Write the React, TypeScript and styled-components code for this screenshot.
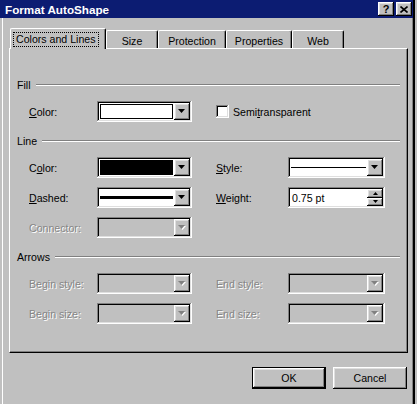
import styled, { createGlobalStyle, css } from "styled-components";

const GlobalStyle = createGlobalStyle`
  html, body {
    margin: 0;
    padding: 0;
    background: #c0c0c0;
  }
  body {
    font-family: "Liberation Sans", Arial, sans-serif;
    font-size: 10.6px;
    color: #000;
  }
`;

const raised = css`
  box-shadow: inset -1px -1px #000, inset 1px 1px #fff, inset -2px -2px #808080,
    inset 2px 2px #dfdfdf;
`;

const sunken = css`
  box-shadow: inset -1px -1px #fff, inset 1px 1px #808080, inset -2px -2px #dfdfdf,
    inset 2px 2px #000;
`;

const Frame = styled.div`
  box-sizing: border-box;
  width: 415px;
  height: 404px;
  border-right: 2px solid #000;
  box-shadow: inset -1px 0 #808080;
  display: flex;
  flex-direction: column;
`;

const TitleBar = styled.div`
  height: 18px;
  flex-shrink: 0;
  background: #0c1c72;
  color: #fff;
  font-weight: bold;
  font-size: 11.7px;
  display: flex;
  align-items: center;
  justify-content: space-between;
  padding: 0 1px 0 5px;
`;

const TitleButtons = styled.div`
  display: flex;
  gap: 2px;
`;

const TitleButton = styled.div`
  box-sizing: border-box;
  width: 16px;
  height: 14px;
  background: #c0c0c0;
  color: #000;
  font-weight: bold;
  font-size: 11px;
  display: flex;
  align-items: center;
  justify-content: center;
  ${raised};
`;

const Body = styled.div`
  flex: 1;
  margin-left: 2px;
  border-left: 1px solid #fff;
  padding: 10px 5px 0 6px;
`;

const TabStrip = styled.div`
  display: flex;
  align-items: flex-end;
  height: 20px;
  padding-left: 1px;
`;

const Tab = styled.div<{ $active?: boolean; $w: number }>`
  box-sizing: border-box;
  width: ${(p) => p.$w}px;
  height: ${(p) => (p.$active ? 21 : 18)}px;
  border-top: 1px solid #fff;
  border-left: 1px solid #fff;
  border-right: 1px solid #000;
  border-radius: 2px 2px 0 0;
  box-shadow: inset -1px 0 #808080;
  background: #c0c0c0;
  display: flex;
  align-items: center;
  justify-content: ${(p) => (p.$active ? "flex-start" : "center")};
  padding-top: ${(p) => (p.$active ? 0 : 2)}px;
  padding-left: ${(p) => (p.$active ? 2 : 0)}px;
  ${(p) =>
    p.$active &&
    css`
      margin-bottom: -1px;
      position: relative;
      z-index: 1;
    `}
`;

const FocusRing = styled.span`
  border: 1px dotted #000;
  padding: 0 2px;
  line-height: 13px;
  white-space: nowrap;
`;

const Panel = styled.div`
  box-sizing: border-box;
  width: 399px;
  height: 305px;
  border-top: 1px solid #fff;
  border-left: 1px solid #fff;
  border-right: 1px solid #000;
  border-bottom: 1px solid #000;
  box-shadow: inset -1px -1px #808080;
  padding: 29px 7px 0 7px;
`;

const Section = styled.div`
  display: flex;
  flex-direction: column;
  gap: 9px;
  & + & {
    margin-top: 12px;
  }
`;

const SectionHeader = styled.div`
  display: flex;
  align-items: center;
  gap: 5px;
  height: 13px;
  margin-bottom: 1px;
`;

const Rule = styled.div`
  flex: 1;
  border-top: 1px solid #808080;
  border-bottom: 1px solid #fff;
`;

const Row = styled.div`
  display: grid;
  grid-template-columns: 68px 95px 24px 72px 97px;
  align-items: center;
  height: 21px;
  padding-left: 12px;
`;

const Label = styled.span<{ $disabled?: boolean; $col?: number }>`
  grid-column: ${(p) => p.$col ?? 1};
  white-space: nowrap;
  color: ${(p) => (p.$disabled ? "#868686" : "#000")};
  text-shadow: ${(p) => (p.$disabled ? "1px 1px 0 #fff" : "none")};
`;

const Combo = styled.div<{ $disabled?: boolean; $col?: number }>`
  grid-column: ${(p) => p.$col ?? 2};
  box-sizing: border-box;
  height: 21px;
  display: flex;
  padding: 2px;
  background: ${(p) => (p.$disabled ? "#c0c0c0" : "#fff")};
  ${sunken};
`;

const ComboValue = styled.div`
  flex: 1;
  display: flex;
  align-items: center;
  padding: 0 1px;
`;

const Swatch = styled.div<{ $color: string }>`
  flex: 1;
  height: 13px;
  border: 1px solid #000;
  background: ${(p) => p.$color};
`;

const LineSample = styled.div<{ $thickness: number }>`
  flex: 1;
  height: ${(p) => p.$thickness}px;
  background: #000;
`;

const ArrowButton = styled.div`
  box-sizing: border-box;
  width: 16px;
  background: #c0c0c0;
  display: flex;
  align-items: center;
  justify-content: center;
  ${raised};
`;

const SpinField = styled.div<{ $col?: number }>`
  grid-column: ${(p) => p.$col ?? 5};
  box-sizing: border-box;
  height: 21px;
  display: flex;
  padding: 2px;
  background: #fff;
  ${sunken};
`;

const SpinText = styled.div`
  flex: 1;
  display: flex;
  align-items: center;
  padding-left: 2px;
`;

const SpinButtons = styled.div`
  width: 16px;
  display: flex;
  flex-direction: column;
`;

const SpinButton = styled.div`
  flex: 1;
  background: #c0c0c0;
  display: flex;
  align-items: center;
  justify-content: center;
  ${raised};
`;

const CheckRow = styled.label`
  grid-column: 4 / span 2;
  display: flex;
  align-items: center;
  gap: 4px;
`;

const CheckBox = styled.span`
  box-sizing: border-box;
  width: 13px;
  height: 13px;
  background: #fff;
  ${sunken};
`;

const Footer = styled.div`
  display: flex;
  justify-content: flex-end;
  gap: 7px;
  margin-top: 14px;
  width: 399px;
  padding-right: 1px;
  box-sizing: border-box;
`;

const Button = styled.div<{ $default?: boolean }>`
  box-sizing: border-box;
  width: 74px;
  height: 22px;
  background: #c0c0c0;
  display: flex;
  align-items: center;
  justify-content: center;
  ${(p) =>
    p.$default
      ? css`
          border: 1px solid #000;
          ${raised};
        `
      : raised};
`;

const DownArrow = ({ disabled }: { disabled?: boolean }) => (
  <svg width="8" height="5" viewBox="0 0 8 5">
    {disabled && <polygon points="1,1 8,1 4.5,5" fill="#fff" />}
    <polygon points="0,0 7,0 3.5,4" fill={disabled ? "#808080" : "#000"} />
  </svg>
);

const SmallArrow = ({ up }: { up?: boolean }) => (
  <svg width="5" height="3" viewBox="0 0 5 3">
    <polygon points={up ? "0,3 5,3 2.5,0" : "0,0 5,0 2.5,3"} fill="#000" />
  </svg>
);

const CloseGlyph = () => (
  <svg width="8" height="7" viewBox="0 0 8 7">
    <path d="M0.5 0.5 L7.5 6.5 M7.5 0.5 L0.5 6.5" stroke="#000" strokeWidth="1.6" />
  </svg>
);

const Dropdown = ({
  col,
  disabled,
  children,
}: {
  col?: number;
  disabled?: boolean;
  children?: React.ReactNode;
}) => (
  <Combo $col={col} $disabled={disabled}>
    <ComboValue>{children}</ComboValue>
    <ArrowButton>
      <DownArrow disabled={disabled} />
    </ArrowButton>
  </Combo>
);

const tabs = [
  { name: "Colors and Lines", w: 96 },
  { name: "Size", w: 52 },
  { name: "Protection", w: 68 },
  { name: "Properties", w: 66 },
  { name: "Web", w: 52 },
];

export default function App() {
  return (
    <>
      <GlobalStyle />
      <Frame>
        <TitleBar>
          <span>Format AutoShape</span>
          <TitleButtons>
            <TitleButton>?</TitleButton>
            <TitleButton>
              <CloseGlyph />
            </TitleButton>
          </TitleButtons>
        </TitleBar>
        <Body>
          <TabStrip>
            {tabs.map((t, i) => (
              <Tab key={t.name} $w={t.w} $active={i === 0}>
                {i === 0 ? <FocusRing>{t.name}</FocusRing> : t.name}
              </Tab>
            ))}
          </TabStrip>
          <Panel>
            <Section>
              <SectionHeader>
                Fill
                <Rule />
              </SectionHeader>
              <Row>
                <Label>
                  <u>C</u>olor:
                </Label>
                <Dropdown>
                  <Swatch $color="#fff" />
                </Dropdown>
                <CheckRow>
                  <CheckBox />
                  <span>
                    Semi<u>t</u>ransparent
                  </span>
                </CheckRow>
              </Row>
            </Section>
            <Section>
              <SectionHeader>
                Line
                <Rule />
              </SectionHeader>
              <Row>
                <Label>
                  C<u>o</u>lor:
                </Label>
                <Dropdown>
                  <Swatch $color="#000" />
                </Dropdown>
                <Label $col={4}>
                  <u>S</u>tyle:
                </Label>
                <Dropdown col={5}>
                  <LineSample $thickness={1} />
                </Dropdown>
              </Row>
              <Row>
                <Label>
                  <u>D</u>ashed:
                </Label>
                <Dropdown>
                  <LineSample $thickness={3} />
                </Dropdown>
                <Label $col={4}>
                  <u>W</u>eight:
                </Label>
                <SpinField>
                  <SpinText>0.75 pt</SpinText>
                  <SpinButtons>
                    <SpinButton>
                      <SmallArrow up />
                    </SpinButton>
                    <SpinButton>
                      <SmallArrow />
                    </SpinButton>
                  </SpinButtons>
                </SpinField>
              </Row>
              <Row>
                <Label $disabled>Connector:</Label>
                <Dropdown disabled />
              </Row>
            </Section>
            <Section>
              <SectionHeader>
                Arrows
                <Rule />
              </SectionHeader>
              <Row>
                <Label $disabled>Begin style:</Label>
                <Dropdown disabled />
                <Label $disabled $col={4}>
                  End style:
                </Label>
                <Dropdown col={5} disabled />
              </Row>
              <Row>
                <Label $disabled>Begin size:</Label>
                <Dropdown disabled />
                <Label $disabled $col={4}>
                  End size:
                </Label>
                <Dropdown col={5} disabled />
              </Row>
            </Section>
          </Panel>
          <Footer>
            <Button $default>OK</Button>
            <Button>Cancel</Button>
          </Footer>
        </Body>
      </Frame>
    </>
  );
}
